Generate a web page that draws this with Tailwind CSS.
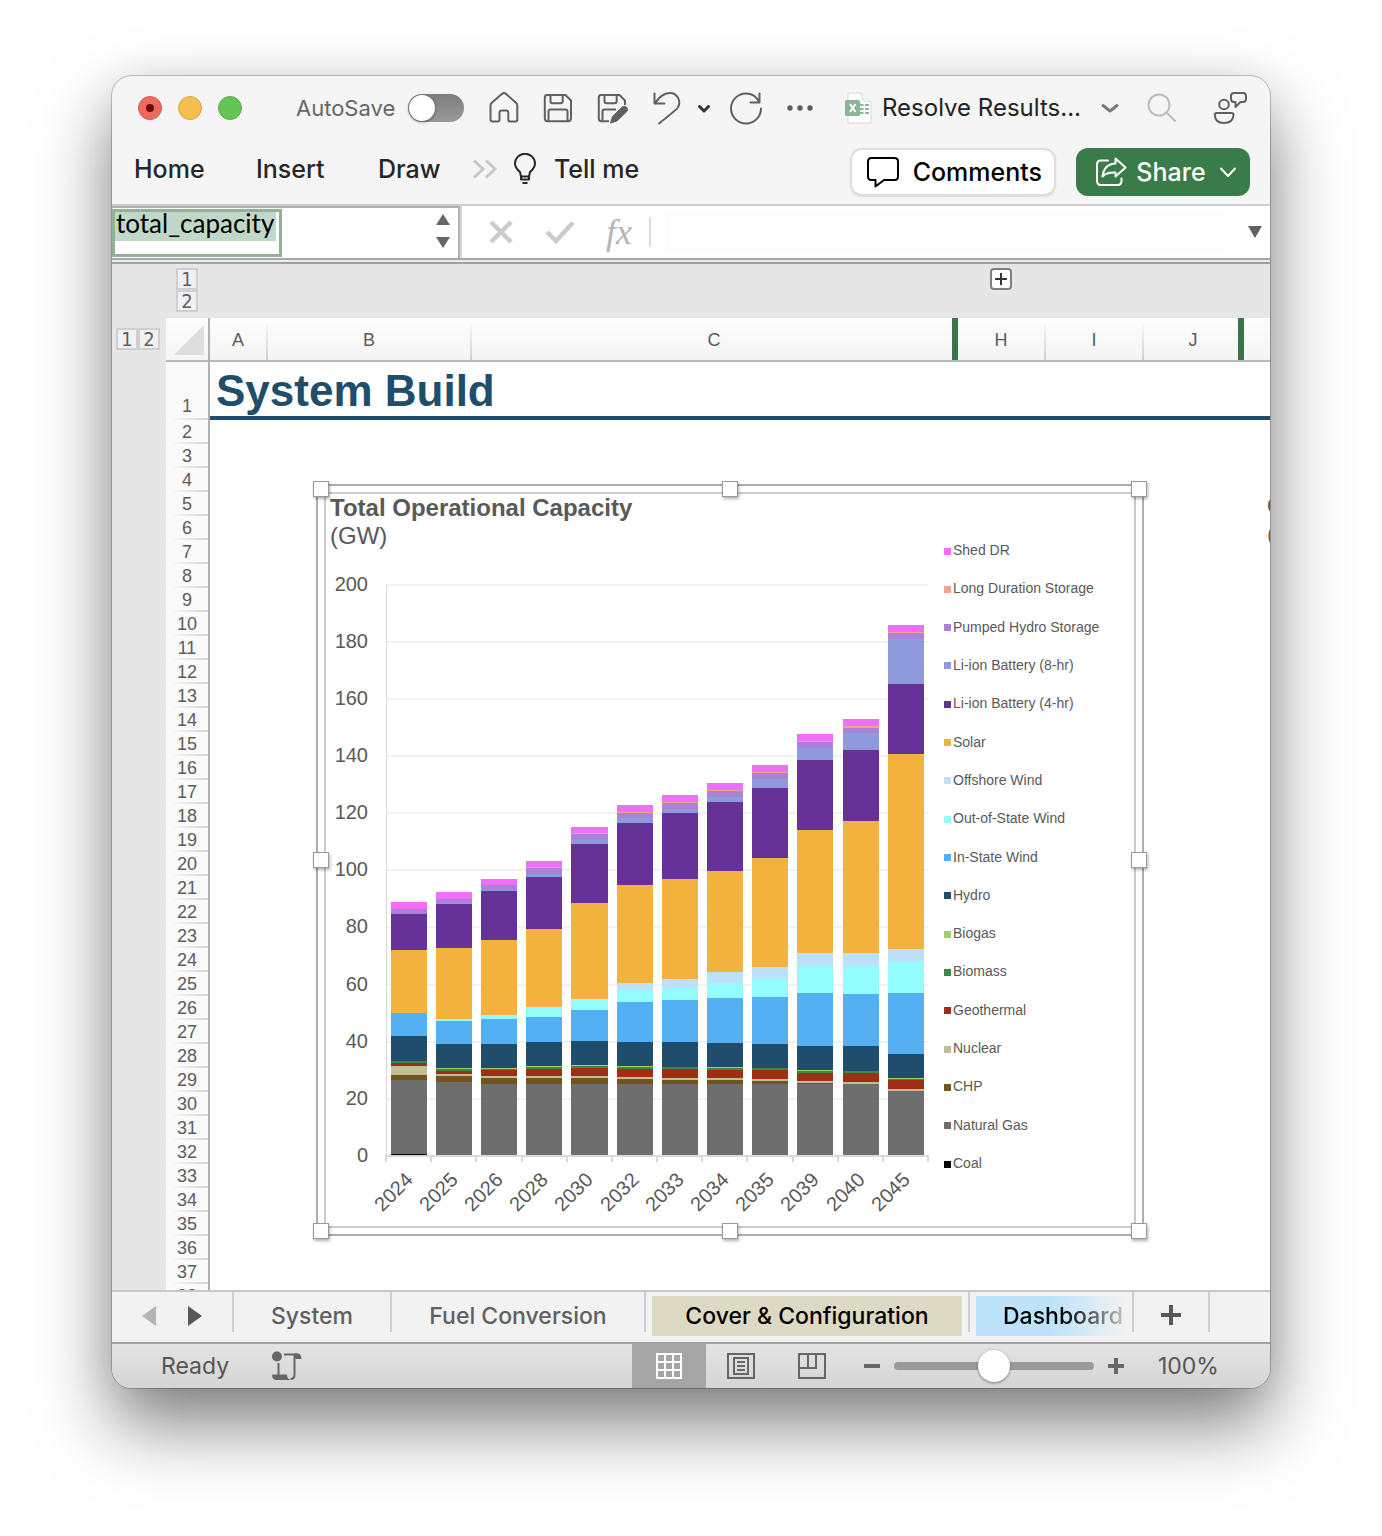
<!DOCTYPE html>
<html lang="en">
<head>
<meta charset="utf-8">
<meta name="viewport" content="width=device-width, initial-scale=1">
<title>Resolve Results</title>
<script src="https://cdn.jsdelivr.net/npm/@tailwindcss/browser@4"></script>
</head>
<body class="min-h-screen bg-white px-[112px] pt-[76px] font-['Inter',sans-serif]">
<div class="flex h-[calc(100vh-224px)] flex-col overflow-hidden rounded-[20px] bg-[#f5f5f5] shadow-[0_0_0_1px_rgba(0,0,0,0.22),0_36px_72px_rgba(0,0,0,0.5),0_0_40px_rgba(0,0,0,0.06)]">

  <!-- Title bar -->
  <header class="flex h-16 shrink-0 items-center pr-[22px] pl-[26px] text-[#666]">
    <div class="flex shrink-0 gap-4">
      <button aria-label="Close" class="flex size-6 items-center justify-center rounded-full border border-[#d6584e] bg-[#ed6a5f]"><span class="size-2 rounded-full bg-[#6b1008]"></span></button>
      <button aria-label="Minimize" class="size-6 rounded-full border border-[#dba43f] bg-[#f5bf50]"></button>
      <button aria-label="Zoom" class="size-6 rounded-full border border-[#56b144] bg-[#62c655]"></button>
    </div>
    <label for="autosave" class="ml-[54px] w-[100px] shrink-0 text-[22px] leading-7 whitespace-nowrap">AutoSave</label>
    <input id="autosave" type="checkbox" role="switch" class="ml-3 h-7 w-14 shrink-0 appearance-none rounded-full bg-linear-to-b from-[#7d7d7d] to-[#999] before:m-px before:block before:size-[26px] before:rounded-full before:bg-white before:shadow-[0_1px_3px_rgba(0,0,0,0.5)]">
    <button aria-label="Home" class="ml-6 shrink-0"><svg class="size-8" viewBox="0 0 32 32" fill="none" stroke="#606060" stroke-width="2" stroke-linejoin="round"><path d="M2.500 13.500Q2.500 12 3.800 10.800L14.400 1.600Q16 .4 17.600 1.600L28 10.800Q29.300 12 29.300 13.500V27.500Q29.300 29.500 27.300 29.500H22Q20.300 29.500 20.300 27.800V20.500Q20.300 18.500 18.300 18.500H13.500Q11.500 18.500 11.500 20.500V27.800Q11.500 29.500 9.800 29.500H4.500Q2.500 29.500 2.500 27.500Z"/></svg></button>
    <button aria-label="Save" class="ml-[22px] shrink-0"><svg class="size-8" viewBox="0 0 32 32" fill="none" stroke="#606060" stroke-width="2" stroke-linejoin="round"><path d="M5 3H23.500L29 8.500V26Q29 29.200 26 29.200H5.500Q2.800 29.200 2.800 26.500V5.500Q2.800 3 5 3Z"/><path d="M8.500 3V9Q8.500 11.200 10.500 11.200H18.500Q20.700 11.200 20.700 9V3M6.500 29V19.500Q6.500 17.500 8.500 17.500H23.500Q25.500 17.500 25.500 19.500V29"/></svg></button>
    <button aria-label="Save a copy" class="ml-[22px] shrink-0"><svg class="h-8 w-[34px]" viewBox="0 0 34 32" fill="none" stroke="#606060" stroke-width="2" stroke-linejoin="round"><path d="M13 29.200H5.500Q2.800 29.200 2.800 26.500V5.500Q2.800 3 5 3H23.500L29 8.500V13"/><path d="M8.500 3V9Q8.500 11.200 10.500 11.200H18.500Q20.700 11.200 20.700 9V3M6.500 29V19.500Q6.500 17.500 8.500 17.500H20"/><path d="M14.500 31L16.500 24.500L26.500 14.800Q29 13.500 30.800 15.500Q32.300 17.500 30.800 19.500L21 29Z" fill="#606060" stroke-width="1"/></svg></button>
    <button aria-label="Undo" class="ml-5 shrink-0"><svg class="h-[34px] w-[34px]" viewBox="0 0 34 34" fill="none" stroke="#606060" stroke-width="2" stroke-linecap="round" stroke-linejoin="round"><path d="M4.500 2.500V12.500H14.500M4.500 12.500C9 7 13 2 20 2C27 2 32 10 27.500 17Q26 19 9 32.500"/></svg></button>
    <button aria-label="Undo history" class="ml-3 shrink-0"><svg class="size-4" viewBox="0 0 16 16" fill="none" stroke="#333" stroke-width="3" stroke-linecap="round" stroke-linejoin="round"><path d="M3.500 6.500L8 11L12.500 6.500"/></svg></button>
    <button aria-label="Redo" class="ml-[18px] shrink-0"><svg class="h-[34px] w-8" viewBox="0 0 32 34" fill="none" stroke="#606060" stroke-width="2" stroke-linecap="round" stroke-linejoin="round"><path d="M29.500 2.500V11.500H20.500M29 11C26.500 5.500 21.500 2.500 16 2.500A15 15 0 1 0 31 17.500"/></svg></button>
    <button aria-label="More" class="ml-6 shrink-0"><svg class="h-8 w-7" viewBox="0 0 28 32" fill="#5c5c5c"><circle cx="4" cy="16" r="2.700"/><circle cx="14" cy="16" r="2.700"/><circle cx="24" cy="16" r="2.700"/></svg></button>
    <svg class="ml-[30px] h-8 w-[30px] shrink-0" viewBox="0 0 30 32"><path d="M4 1H17L27 10V31H4Z" fill="#fff" stroke="#d8d8d8"/><path d="M17 1L19 8Q19.500 9.500 27 10" fill="#f4f4f4" stroke="#dcdcdc"/><path d="M16 13H19.500M21 13H25M16 17H19.500M21 17H25M16 21H19.500M21 21H25" stroke="#8bb79a" stroke-width="2.200"/><rect x="1" y="8" width="15" height="16" rx="1.500" fill="#8ab699"/><path d="M6 12L11.500 20M11.500 12L6 20" stroke="#fff" stroke-width="2"/></svg>
    <h1 class="ml-2 min-w-0 flex-1 truncate text-[24px] leading-7 text-[#222]">Resolve Results...</h1>
    <button aria-label="Document menu" class="shrink-0"><svg class="size-5" viewBox="0 0 20 20" fill="none" stroke="#7a7a7a" stroke-width="3" stroke-linecap="round" stroke-linejoin="round"><path d="M3 7.500Q10 13 10 13Q10 13 17 7.500"/></svg></button>
    <button aria-label="Search" class="ml-[26px] shrink-0"><svg class="size-8" viewBox="0 0 32 32" fill="none" stroke="#bdbdbd" stroke-width="2"><circle cx="13" cy="13" r="10.500"/><path d="M20.500 20.500L29.500 29.500"/></svg></button>
    <button aria-label="Presence" class="ml-[34px] shrink-0"><svg class="h-[34px] w-9" viewBox="0 0 36 34" fill="none" stroke="#606060" stroke-width="2" stroke-linejoin="round"><circle cx="12" cy="13.500" r="4.800"/><path d="M4.500 22H19.500Q21.500 22 21.500 24Q21 32 12 32Q3 32 2.800 24Q2.800 22 4.500 22Z"/><path d="M22 2H31Q34 2 34 5V8Q34 11 31 11H28.500L23.500 16V11H22Q19 11 19 8V5Q19 2 22 2Z"/></svg></button>
  </header>

  <!-- Ribbon tabs -->
  <nav class="flex h-16 shrink-0 items-center pr-5 pl-[22px] text-[25px] leading-8 font-medium text-[#262626]">
    <div class="flex items-center pb-1.5">
      <a href="#home" class="w-[122px]">Home</a>
      <a href="#insert" class="w-[122px]">Insert</a>
      <a href="#draw" class="w-[92px]">Draw</a>
      <button aria-label="More tabs" class="mr-4 ml-0.5"><svg class="h-6 w-[26px]" viewBox="0 0 26 24" fill="none" stroke="#c8c8c8" stroke-width="3"><path d="M2 3.500L11 12L2 20.500M14 3.500L23 12L14 20.500"/></svg></button>
      <svg class="h-8 w-[22px]" viewBox="0 0 22 32" fill="none" stroke="#262626" stroke-width="2"><path d="M7 23.500L6 19C3 16.500 1 14 1 10.500A10 9.700 0 0 1 21 10.500C21 14 19 16.500 16 19L15 23.500ZM7 23.500V26.500H15V23.500M8.500 30H13.500" stroke-linejoin="round"/></svg>
      <a href="#tellme" class="ml-[18px] whitespace-nowrap">Tell me</a>
    </div>
    <button class="ml-auto flex h-12 w-[206px] shrink-0 items-center justify-between rounded-xl border-2 border-[#dedede] bg-white pr-3 pl-[15px] text-black shadow-[0_1px_2px_rgba(0,0,0,0.1)]">
      <svg class="h-8 w-8 shrink-0" viewBox="0 0 32 32" fill="none" stroke="#000" stroke-width="2" stroke-linejoin="round"><path d="M4.500 2H27.500Q31 2 31 5.500V20.500Q31 24 27.500 24H17L8.500 30.500V24H4.500Q1 24 1 20.500V5.500Q1 2 4.500 2Z"/></svg>
      <span>Comments</span>
    </button>
    <button class="ml-5 flex h-12 w-[174px] shrink-0 items-center justify-between rounded-xl bg-[#3a7c49] pr-[13px] pl-[19px] text-white">
      <svg class="h-8 w-[32px]" viewBox="0 0 32 32" fill="none" stroke="#fff" stroke-width="2" stroke-linecap="round" stroke-linejoin="round"><path d="M13 4.500H6Q2 4.500 2 8.500V25Q2 29 6 29H22.500Q26.500 29 26.500 25V22.500"/><path d="M20.500 2.500L30.500 11.500L20.500 20.500V16.500Q11.500 16 7.500 20.500Q9 8 20.500 7.500Z"/></svg>
      <span class="pr-1">Share</span>
      <svg class="h-4 w-[18px]" viewBox="0 0 18 16" fill="none" stroke="#fff" stroke-width="2" stroke-linecap="round" stroke-linejoin="round"><path d="M2 4.500L9 12L16 4.500"/></svg>
    </button>
  </nav>

  <!-- Formula bar -->
  <div class="flex h-14 shrink-0 items-center border-t-2 border-b-2 border-t-[#cdcdcd] border-b-[#a6a6a6] bg-white">
    <div class="flex h-[52px] w-[348px] shrink-0 items-center justify-between border-t-2 border-r-2 border-[#b0b0b0] pr-[7px]">
      <input aria-label="Name box" value="total_capacity" class="h-12 w-[170px] border-[3px] border-[#92b198] bg-[linear-gradient(#c0d8c8,#c0d8c8)] bg-[length:161px_29px] bg-no-repeat bg-left-top pr-0 pb-5 pl-px font-['Lato',sans-serif] text-[26px] leading-6 text-black outline-none">
      <div class="flex flex-col gap-3 pb-1">
        <button aria-label="Previous name" class="flex"><svg class="h-[11px] w-4" viewBox="0 0 16 11" fill="#666"><path d="M8 0L15 11H1Z"/></svg></button>
        <button aria-label="Next name" class="flex"><svg class="h-[11px] w-4" viewBox="0 0 16 11" fill="#666"><path d="M8 11L15 0H1Z"/></svg></button>
      </div>
    </div>
    <div class="h-full w-0.5 bg-[#d6d6d6]"></div>
    <button aria-label="Cancel" class="ml-[26px]"><svg class="size-[26px]" viewBox="0 0 26 26" stroke="#cbcbcb" stroke-width="4.500"><path d="M3 3L23 23M23 3L3 23"/></svg></button>
    <button aria-label="Enter" class="ml-[31px]"><svg class="h-[26px] w-[30px]" viewBox="0 0 30 26" fill="none" stroke="#cbcbcb" stroke-width="4.500"><path d="M2 13L11 22L28 3.500"/></svg></button>
    <button aria-label="Insert function" class="ml-7 w-[32px] font-['Liberation_Serif',serif] text-[36px] leading-10 text-[#b4b4b4] italic">fx</button>
    <div class="ml-[14px] h-[30px] w-0.5 bg-[#dcdcdc]"></div>
    <input aria-label="Formula" class="ml-[14px] h-[38px] min-w-0 flex-1 bg-[#fdfdfd]">
    <button aria-label="Expand formula bar" class="mr-[7px] ml-[22px]"><svg class="h-3 w-4" viewBox="0 0 16 12" fill="#606060"><path d="M8 12L15 0H1Z"/></svg></button>
  </div>
  <div class="h-1 shrink-0 border-b-2 border-[#a0a0a0] bg-[#ececec]"></div>

  <!-- Column outline -->
  <div class="flex h-[54px] shrink-0 items-start bg-[#e6e6e6] pt-1 pl-16 text-[#606060]">
    <div class="flex flex-col font-['DejaVu_Sans_Condensed','DejaVu_Sans',sans-serif] text-[20px] leading-5">
      <button class="size-[22px] border-2 border-[#cfcfd2] bg-[#f1f1f3] leading-[18px]">1</button>
      <button class="size-[22px] border-2 border-[#cfcfd2] bg-[#f1f1f3] leading-[18px]">2</button>
    </div>
    <button aria-label="Expand columns" class="ml-[792px] flex size-[22px] items-center justify-center rounded border-2 border-[#808080] bg-white"><svg class="size-3" viewBox="0 0 12 12" stroke="#333" stroke-width="2"><path d="M6 0V12M0 6H12"/></svg></button>
  </div>

  <!-- Sheet -->
  <main class="flex min-h-0 flex-1 bg-white">
    <div class="flex w-[54px] shrink-0 items-start bg-[#e6e6e6] pt-[10px] pl-1 font-['DejaVu_Sans_Condensed','DejaVu_Sans',sans-serif] text-[20px] text-[#606060]">
      <button class="size-[22px] border-2 border-[#cfcfd2] bg-[#f1f1f3] leading-[18px]">1</button>
      <button class="size-[22px] border-2 border-[#cfcfd2] bg-[#f1f1f3] leading-[18px]">2</button>
    </div>
    <div class="relative min-w-0 flex-1 overflow-hidden font-['Liberation_Sans',sans-serif]">
      <table class="w-full table-fixed border-separate border-spacing-0">
        <colgroup><col class="w-[44px]"><col class="w-[58px]"><col class="w-[204px]"><col class="w-[486px]"><col class="w-[88px]"><col class="w-[98px]"><col class="w-[100px]"><col></colgroup>
        <thead>
          <tr class="h-11 bg-linear-to-b from-[#fdfdfd] to-[#f4f4f4] text-[18px] leading-6 text-[#5c5c5c] [&>th]:border-b-2 [&>th]:border-b-[#b8b8b8] [&>th]:p-0 [&>th]:pt-0.5 [&>th]:pr-0.5 [&>th]:font-normal">
            <th class="border-r-2 border-r-[#b0b0b0]"><svg class="ml-2 h-[30px] w-[30px]" viewBox="0 0 30 30" fill="#dedede"><path d="M30 0V30H0Z"/></svg></th>
            <th class="bg-[linear-gradient(#fff,#d0d0d0)] bg-[length:2px_100%] bg-right bg-no-repeat">A</th>
            <th class="bg-[linear-gradient(#fff,#d0d0d0)] bg-[length:2px_100%] bg-right bg-no-repeat">B</th>
            <th class="bg-[linear-gradient(#3a7448,#3a7448)] bg-[length:6px_100%] bg-right bg-no-repeat">C</th>
            <th class="bg-[linear-gradient(#fff,#d0d0d0)] bg-[length:2px_100%] bg-right bg-no-repeat">H</th>
            <th class="bg-[linear-gradient(#fff,#d0d0d0)] bg-[length:2px_100%] bg-right bg-no-repeat">I</th>
            <th class="bg-[linear-gradient(#3a7448,#3a7448)] bg-[length:6px_100%] bg-right bg-no-repeat">J</th>
            <th></th>
          </tr>
        </thead>
        <tbody id="rows">
          <tr class="h-[58px]">
            <th class="border-r-2 border-[#b0b0b0] bg-[#fafafa] bg-[linear-gradient(90deg,#fff,#d4d4d4)] bg-[length:100%_2px] bg-bottom bg-no-repeat p-0 pb-0.5 align-bottom text-[18px] leading-6 font-normal text-[#5c5c5c]">1</th>
            <td colspan="7" class="border-b-4 border-[#204d6b] p-0 pt-1 pl-1.5 text-[44px] leading-[50px] font-bold whitespace-nowrap text-[#204d6b]">System Build</td>
          </tr>
        </tbody>
      </table>

      <!-- Selected chart object -->
      <figure class="absolute top-[166px] left-[150px] h-[752px] w-[828px] border-2 border-[#adadad] bg-white p-1.5">
        <div class="flex h-full border-2 border-[#cbcbcb]">
          <div class="w-[604px] shrink-0 pl-1 text-[24px] leading-7 whitespace-nowrap text-[#595959]">
            <figcaption><b>Total Operational Capacity</b><br>(GW)</figcaption>
            <svg id="plot" class="h-[672px] w-[600px]" viewBox="330 550 600 672" font-family="Liberation Sans, sans-serif" font-size="20" fill="#595959" role="img" aria-label="Total operational capacity by year"></svg>
          </div>
          <ul id="legend" class="mt-[47px] flex h-[631px] flex-col justify-between pl-[14px] text-[14px] leading-[18px] whitespace-nowrap text-[#595959]"></ul>
        </div>
        <span class="absolute -top-[5px] -left-[5px] size-4 border border-[#999] bg-white shadow-[1px_2px_3px_rgba(0,0,0,0.3)]"></span>
        <span class="absolute -top-[5px] left-1/2 size-4 -translate-x-1/2 border border-[#999] bg-white shadow-[1px_2px_3px_rgba(0,0,0,0.3)]"></span>
        <span class="absolute -top-[5px] -right-[5px] size-4 border border-[#999] bg-white shadow-[1px_2px_3px_rgba(0,0,0,0.3)]"></span>
        <span class="absolute top-1/2 -left-[5px] size-4 -translate-y-1/2 border border-[#999] bg-white shadow-[1px_2px_3px_rgba(0,0,0,0.3)]"></span>
        <span class="absolute top-1/2 -right-[5px] size-4 -translate-y-1/2 border border-[#999] bg-white shadow-[1px_2px_3px_rgba(0,0,0,0.3)]"></span>
        <span class="absolute -bottom-[5px] -left-[5px] size-4 border border-[#999] bg-white shadow-[1px_2px_3px_rgba(0,0,0,0.3)]"></span>
        <span class="absolute -bottom-[5px] left-1/2 size-4 -translate-x-1/2 border border-[#999] bg-white shadow-[1px_2px_3px_rgba(0,0,0,0.3)]"></span>
        <span class="absolute -right-[5px] -bottom-[5px] size-4 border border-[#999] bg-white shadow-[1px_2px_3px_rgba(0,0,0,0.3)]"></span>
      </figure>

      <!-- Next chart, running off the right edge -->
      <div class="absolute top-[174px] left-[1101px] text-[24px] leading-[28px] text-[#595959]"><b>O</b><br>(</div>
    </div>
  </main>

  <!-- Sheet tabs -->
  <div class="flex h-[52px] shrink-0 border-t-2 border-[#c8c8c8] bg-[#f2f2f2] text-[23px] leading-10 font-medium whitespace-nowrap text-[#606060]">
    <div class="flex h-10 w-[122px] shrink-0 items-center gap-[30px] border-r-2 border-[#cecece] pt-2 pl-[29px]">
      <button aria-label="Previous sheet"><svg class="h-[22px] w-4" viewBox="0 0 16 22" fill="#b4b4b4"><path d="M15 1V21L1 11Z"/></svg></button>
      <button aria-label="Next sheet"><svg class="h-[22px] w-4" viewBox="0 0 16 22" fill="#585858"><path d="M1 1V21L15 11Z"/></svg></button>
    </div>
    <button class="h-10 w-[158px] shrink-0 border-r-2 border-[#cecece] pt-1">System</button>
    <button class="h-10 w-[254px] shrink-0 border-r-2 border-[#cecece] pt-1">Fuel Conversion</button>
    <div class="h-11 w-[322px] shrink-0 pt-1 pl-1.5"><button class="h-10 w-[310px] bg-[#dcd9c5] text-black">Cover &amp; Configuration</button></div>
    <div class="flex h-10 w-[166px] shrink-0 border-x-2 border-[#cecece] pt-1 pl-1.5"><button class="h-10 w-[150px] overflow-hidden bg-linear-to-r from-[#bce3fa] from-50% to-transparent"><span class="block bg-linear-to-r from-black from-50% to-[#ccc] bg-clip-text pl-[27px] text-left text-transparent">Dashboard</span></button></div>
    <button aria-label="New sheet" class="flex h-10 w-[76px] shrink-0 items-center justify-center border-r-2 border-[#cecece] pt-1.5"><svg class="size-5" viewBox="0 0 20 20" stroke="#585858" stroke-width="4"><path d="M10 0V20M0 10H20"/></svg></button>
  </div>

  <!-- Status bar -->
  <footer class="flex h-[46px] shrink-0 items-center border-t-2 border-[#a2a2a2] bg-linear-to-b from-[#e3e3e3] to-[#d5d5d5] pl-[49px] text-[23px] leading-7 text-[#555]">
    <span>Ready</span>
    <button aria-label="Record macro" class="ml-[42px]"><svg class="size-8" viewBox="0 0 32 32" fill="none" stroke="#666" stroke-width="2"><circle cx="6" cy="6.500" r="5" fill="#666" stroke="none"/><path d="M13 4.500H27M7.500 13V26M23.500 5V24.500Q23.500 29 19.500 29"/><path d="M23 3.500H27Q30.500 4 30.500 9H24.500ZM1 24.500H16Q16 28.500 19.500 30H5Q1 29.500 1 24.500Z" fill="#666" stroke="none"/></svg></button>
    <button aria-label="Normal view" class="ml-auto flex h-full w-[74px] items-center justify-center bg-[#a5a5a5]"><svg class="size-[26px]" viewBox="0 0 26 26" fill="none" stroke="#fff" stroke-width="2"><path d="M1 1H25V25H1ZM1 9H25M1 17H25M9 1V25M17 1V25"/></svg></button>
    <button aria-label="Page layout" class="ml-[21px]"><svg class="h-[26px] w-7" viewBox="0 0 28 26" fill="none" stroke="#666" stroke-width="2"><path d="M1 1H27V25H1ZM7 5H21V21H7ZM10 9H18M10 13H18M10 17H18"/></svg></button>
    <button aria-label="Page break preview" class="ml-[43px]"><svg class="h-[26px] w-7" viewBox="0 0 28 26" fill="none" stroke="#666" stroke-width="2"><path d="M1 1H27V25H1ZM1 15H18V1M10 1V15"/></svg></button>
    <button aria-label="Zoom out" class="ml-[38px]"><svg class="size-4" viewBox="0 0 16 16" stroke="#666" stroke-width="4"><path d="M0 8H16"/></svg></button>
    <input aria-label="Zoom level" type="range" min="0" max="200" value="100" class="ml-[14px] h-8 w-[200px] appearance-none bg-transparent [&::-webkit-slider-runnable-track]:h-2 [&::-webkit-slider-runnable-track]:rounded-full [&::-webkit-slider-runnable-track]:bg-[#9a9a9a] [&::-webkit-slider-thumb]:-mt-3 [&::-webkit-slider-thumb]:size-8 [&::-webkit-slider-thumb]:appearance-none [&::-webkit-slider-thumb]:rounded-full [&::-webkit-slider-thumb]:bg-white [&::-webkit-slider-thumb]:shadow-[0_1px_3px_rgba(0,0,0,0.45)]">
    <button aria-label="Zoom in" class="ml-[14px]"><svg class="size-4" viewBox="0 0 16 16" stroke="#666" stroke-width="4"><path d="M8 0V16M0 8H16"/></svg></button>
    <span class="ml-[34px] w-[112px]">100%</span>
  </footer>
</div>

<script>
  // Row headers 2 and up
  const rows = document.getElementById('rows');
  for (let n = 2; n <= 38; n++) {
    rows.insertAdjacentHTML('beforeend', `<tr class="h-6"><th class="border-r-2 border-[#b0b0b0] bg-[#fafafa] bg-[linear-gradient(90deg,#fff,#d4d4d4)] bg-[length:100%_2px] bg-bottom bg-no-repeat p-0 text-[18px] leading-6 font-normal text-[#5c5c5c]">${n}</th><td colspan="7" class="p-0"></td></tr>`);
  }

  // Resources, top of the stack first
  const series = [
    ['Shed DR', '#ee6ff8'], ['Long Duration Storage', '#f2a28c'], ['Pumped Hydro Storage', '#a984d6'],
    ['Li-ion Battery (8-hr)', '#8f9adc'], ['Li-ion Battery (4-hr)', '#673297'], ['Solar', '#f3b13e'],
    ['Offshore Wind', '#bbe2f9'], ['Out-of-State Wind', '#93fcfd'], ['In-State Wind', '#54b0f2'],
    ['Hydro', '#204d6b'], ['Biogas', '#a0d062'], ['Biomass', '#3b8a3e'], ['Geothermal', '#a02e17'],
    ['Nuclear', '#c3bc98'], ['CHP', '#715519'], ['Natural Gas', '#6e6e6e'], ['Coal', '#000000']
  ];
  document.getElementById('legend').innerHTML = series.map(([name, color]) =>
    `<li class="flex items-center gap-0.5"><span class="mt-0.5 size-[7px]" style="background:${color}"></span>${name}</li>`).join('');

  // Year, left edge, width, then the top edge of each resource's segment
  const bars = [
    [2024, 391, 36, 902, 909, 909, 914, 914, 950, 1013, 1013, 1013, 1036, 1061, 1061, 1063, 1066, 1075, 1080, 1154],
    [2025, 436, 36, 892, 899, 899, 903, 904, 948, 1019, 1019, 1021, 1044, 1068, 1069, 1071, 1074, 1076, 1082, 1155],
    [2026, 481, 36, 879, 885, 885, 890, 891, 940, 1015, 1015, 1019, 1044, 1068, 1069, 1070, 1076, 1078, 1084, 1155],
    [2028, 526, 36, 861, 867, 868, 874, 877, 929, 1007, 1007, 1017, 1042, 1066, 1067, 1069, 1076, 1078, 1084, 1155],
    [2030, 571, 37, 827, 833, 834, 840, 844, 903, 999, 999, 1010, 1041, 1065, 1066, 1068, 1076, 1078, 1084, 1155],
    [2032, 617, 36, 805, 812, 813, 818, 823, 885, 983, 990, 1002, 1042, 1066, 1067, 1069, 1077, 1079, 1084, 1155],
    [2033, 662, 36, 795, 802, 803, 809, 813, 879, 979, 988, 1000, 1042, 1067, 1067, 1069, 1078, 1080, 1084, 1155],
    [2034, 707, 36, 783, 790, 791, 797, 802, 871, 972, 983, 998, 1043, 1067, 1068, 1070, 1078, 1080, 1084, 1155],
    [2035, 752, 36, 765, 772, 773, 779, 788, 858, 967, 979, 997, 1044, 1068, 1068, 1070, 1079, 1081, 1084, 1155],
    [2039, 797, 36, 734, 741, 742, 748, 760, 830, 953, 966, 993, 1046, 1070, 1071, 1073, 1081, 1083, 1084, 1155],
    [2040, 843, 36, 719, 726, 728, 733, 750, 821, 953, 966, 994, 1046, 1071, 1071, 1073, 1082, 1084, 1084, 1155],
    [2045, 888, 36, 625, 632, 633, 639, 684, 754, 949, 961, 993, 1054, 1078, 1079, 1080, 1089, 1091, 1091, 1155]
  ];
  let svg = '';
  for (let v = 0; v <= 200; v += 20) {
    const y = Math.floor(1155.35 - v * 2.855);
    if (v) svg += `<rect x="387" y="${y}" width="541" height="2" fill="#f1f1f1"/>`;
    svg += `<text x="368" y="${y + 7}" text-anchor="end">${v}</text>`;
  }
  svg += '<rect x="386" y="585" width="1" height="572" fill="#d9d9d9"/><rect x="386" y="1155" width="542" height="2" fill="#d9d9d9"/>';
  for (let i = 0; i <= 12; i++) svg += `<rect x="${Math.round(385 + i * 45.17)}" y="1155" width="2" height="7" fill="#d9d9d9"/>`;
  for (const [year, x, w, ...tops] of bars) {
    tops.forEach((top, i) => {
      const h = (tops[i + 1] ?? 1155) - top;
      if (h > 0) svg += `<rect x="${x}" y="${top}" width="${w}" height="${h}" fill="${series[i][1]}" shape-rendering="crispEdges"/>`;
    });
    svg += `<text transform="translate(${x + 23} 1181) rotate(-45)" text-anchor="end">${year}</text>`;
  }
  document.getElementById('plot').innerHTML = svg;
</script>
</body>
</html>
